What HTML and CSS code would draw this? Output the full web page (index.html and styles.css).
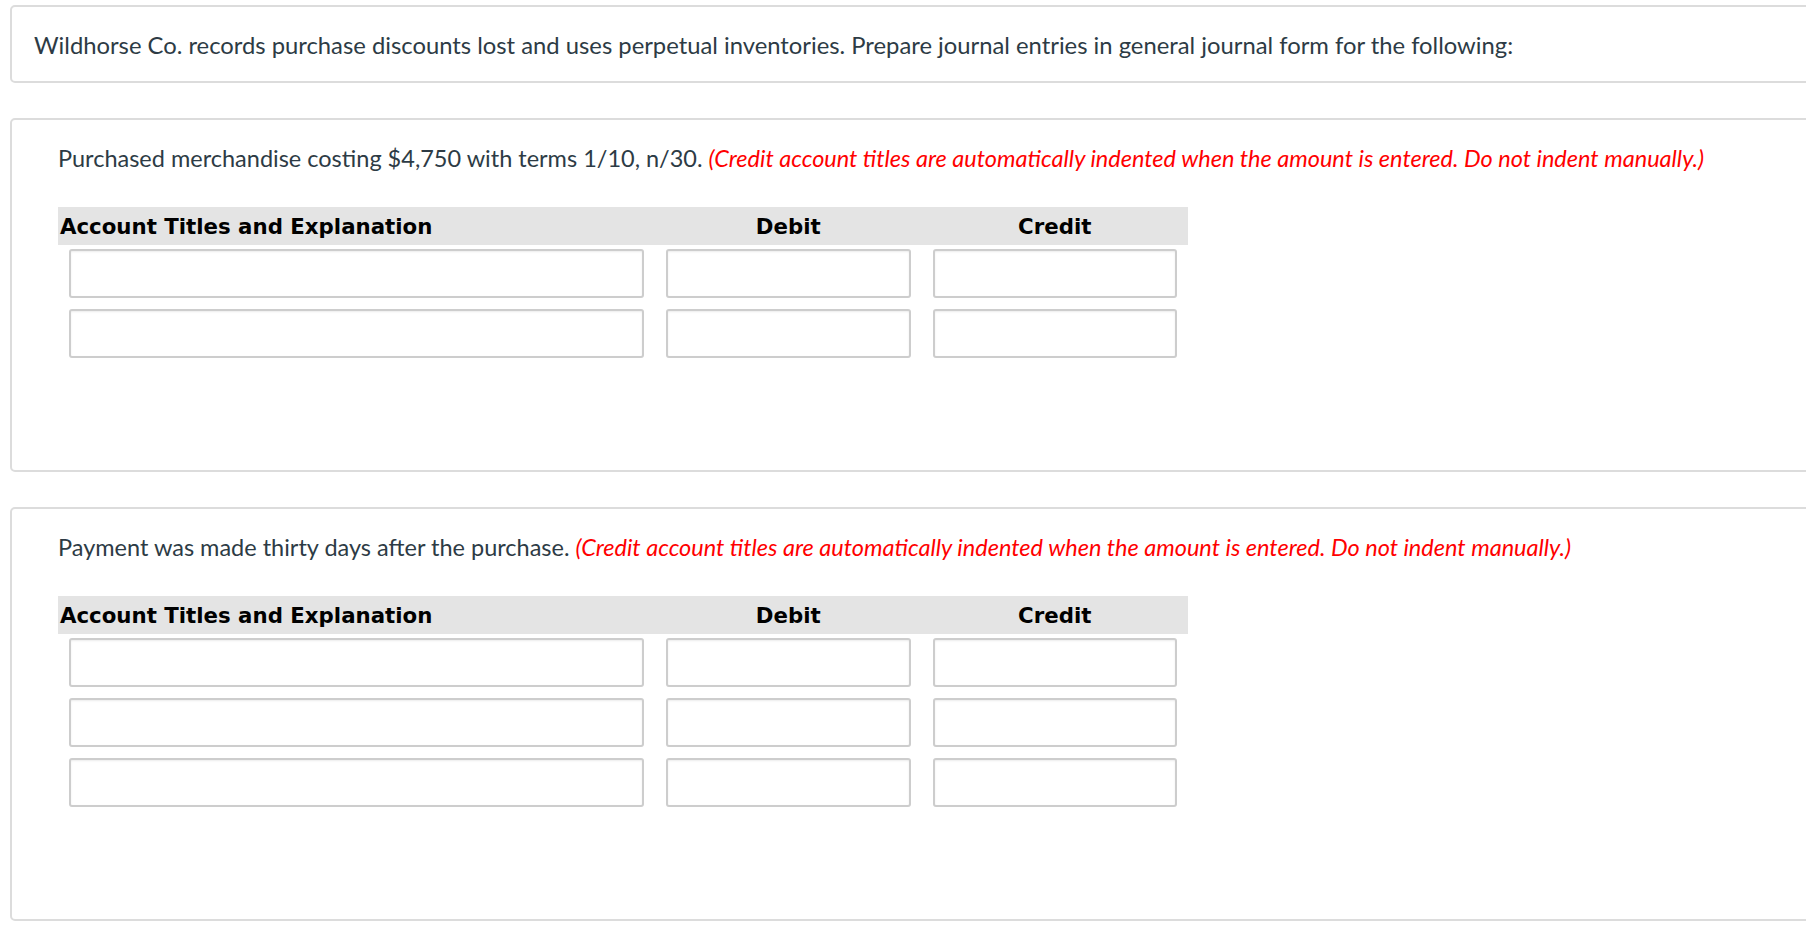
FILE: index.html
```html
<!DOCTYPE html>
<html lang="en">
<head>
    <meta charset="UTF-8">
    <title>Journal Entries</title>
    <link rel="stylesheet" href="styles.css">
</head>
<body>

<div class="page">
    <div class="question intro">
        <p>Wildhorse Co. records purchase discounts lost and uses perpetual inventories. Prepare journal entries in general journal form for the following:</p>
    </div>

    <div class="question part">
        <p>Purchased merchandise costing $4,750 with terms 1/10, n/30. <em class="note">(Credit account titles are automatically indented when the amount is entered. Do not indent manually.)</em></p>
        <table class="journal">
            <tr>
                <th class="col-account">Account Titles and Explanation</th>
                <th class="col-amount">Debit</th>
                <th class="col-amount">Credit</th>
            </tr>
            <tr>
                <td><input type="text"></td>
                <td><input type="text"></td>
                <td><input type="text"></td>
            </tr>
            <tr>
                <td><input type="text"></td>
                <td><input type="text"></td>
                <td><input type="text"></td>
            </tr>
        </table>
    </div>

    <div class="question part">
        <p>Payment was made thirty days after the purchase. <em class="note">(Credit account titles are automatically indented when the amount is entered. Do not indent manually.)</em></p>
        <table class="journal">
            <tr>
                <th class="col-account">Account Titles and Explanation</th>
                <th class="col-amount">Debit</th>
                <th class="col-amount">Credit</th>
            </tr>
            <tr>
                <td><input type="text"></td>
                <td><input type="text"></td>
                <td><input type="text"></td>
            </tr>
            <tr>
                <td><input type="text"></td>
                <td><input type="text"></td>
                <td><input type="text"></td>
            </tr>
            <tr>
                <td><input type="text"></td>
                <td><input type="text"></td>
                <td><input type="text"></td>
            </tr>
        </table>
    </div>
</div>

</body>
</html>
```

FILE: styles.css
```css
body { font-family: Lato, "Open Sans", sans-serif; margin: 0; padding: 0; color: #2d3b45; overflow: hidden; }
.page { padding: 5px 0 0 10px; }
.question { border: 2px solid #dcdcdc; border-radius: 5px; margin: 0 -40px 35px 0; }
.question p { margin: 0; font-size: 23.5px; line-height: 28px; }
.intro { padding: 24px 22px 22px; }
.intro p { font-size: 23.8px; }
.part { padding: 24px 22px 105px 46px; }
.part p { margin-bottom: 35px; }
.note { color: #ff0000; font-style: italic; }
.journal { border-collapse: collapse; width: 1130px; }
.journal th { background-color: #e4e4e4; height: 38px; padding: 0 2px; font-family: "DejaVu Sans", Verdana, sans-serif; font-weight: bold; font-size: 21.3px; color: #000; text-align: center; }
.journal th.col-account { width: 593px; text-align: left; }
.journal td { padding: 4px 11px 7px; }
.journal td input { display: block; width: 100%; height: 49px; box-sizing: border-box; border: 2px solid #cdcdcd; border-radius: 3px; box-shadow: inset 0 1px 2px rgba(0,0,0,0.08); font-size: 18px; }
```
